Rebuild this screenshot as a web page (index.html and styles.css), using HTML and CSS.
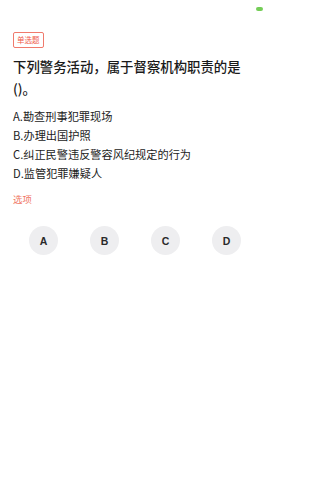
FILE: index.html
```html
<!DOCTYPE html>
<html lang="zh">
<head>
<meta charset="utf-8">
<link rel="stylesheet" href="styles.css">
</head>
<body>
<div class="page">
  <div class="status"><span class="dot"></span></div>
  <div class="content">
    <span class="tag">单选题</span>
    <div class="question">下列警务活动，属于督察机构职责的是()。</div>
    <div class="options">
      <div class="opt">A.勘查刑事犯罪现场</div>
      <div class="opt">B.办理出国护照</div>
      <div class="opt">C.纠正民警违反警容风纪规定的行为</div>
      <div class="opt">D.监管犯罪嫌疑人</div>
    </div>
    <div class="label">选项</div>
    <div class="choices">
      <div class="choice"><span class="circle">A</span></div>
      <div class="choice"><span class="circle">B</span></div>
      <div class="choice"><span class="circle">C</span></div>
      <div class="choice"><span class="circle">D</span></div>
    </div>
  </div>
</div>
</body>
</html>
```
FILE: styles.css
```css
html, body {
  margin: 0;
  padding: 0;
  background: #ffffff;
}
body {
  font-family: "Noto Sans CJK SC", "Noto Sans", sans-serif;
  color: #222;
}
.page {
  width: 270px;
  height: 480px;
  display: flex;
  flex-direction: column;
}
.status {
  height: 14px;
  display: flex;
  justify-content: flex-end;
  align-items: center;
  padding: 2px 7px 0 0;
}
.dot {
  width: 7px;
  height: 4px;
  border-radius: 2px;
  background: #5cc43a;
  opacity: 0.85;
}
.content {
  padding: 16px 13px 0 13px;
  display: flex;
  flex-direction: column;
  align-items: flex-start;
}
.tag {
  font-size: 7.5px;
  line-height: 14px;
  color: #ef5a4a;
  border: 1px solid #f07a6c;
  border-radius: 2px;
  padding: 0 3px;
}
.question {
  margin-top: 7px;
  font-size: 13.4px;
  font-weight: 500;
  line-height: 22px;
  color: #1a1a1a;
}
.options {
  margin-top: 8px;
  display: flex;
  flex-direction: column;
}
.opt {
  font-size: 11.2px;
  font-weight: 400;
  line-height: 19px;
  color: #222;
}
.label {
  margin-top: 9px;
  font-size: 9.4px;
  line-height: 14px;
  color: #f07563;
}
.choices {
  margin-top: 20px;
  align-self: stretch;
  display: grid;
  grid-template-columns: repeat(4, 1fr);
}
.choice {
  display: flex;
  justify-content: center;
}
.circle {
  width: 29px;
  height: 29px;
  border-radius: 50%;
  background: #eeeef0;
  display: flex;
  align-items: center;
  justify-content: center;
  font-family: "Liberation Sans", Arial, sans-serif;
  font-size: 10.5px;
  font-weight: bold;
  color: #2a2a2a;
}
```
